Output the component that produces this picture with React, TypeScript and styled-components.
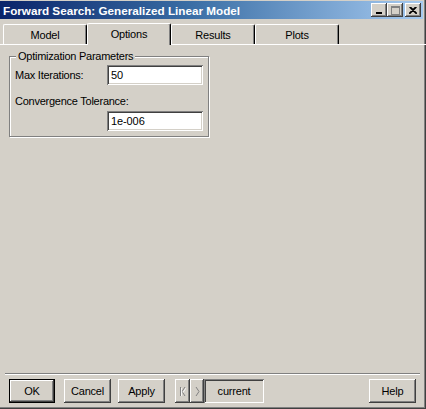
import React from "react";
import styled, { createGlobalStyle } from "styled-components";

const Global = createGlobalStyle`
  html, body { margin: 0; padding: 0; background: #D4D0C8; }
  body { font-family: "Liberation Sans", Arial, sans-serif; font-size: 11px; color: #000; }
`;

const FACE = "#D4D0C8";

const Window = styled.div`
  width: 426px;
  height: 409px;
  box-sizing: border-box;
  background: ${FACE};
  display: flex;
  flex-direction: column;
  box-shadow: inset -1px -1px 0 #404040, inset -2px -2px 0 #808080;
  overflow: hidden;
`;

const TitleBar = styled.div`
  height: 18px;
  margin: 1px 3px 0 0;
  background: linear-gradient(to right, #0a246a 0%, #3a6ea5 45%, #a6caf0 100%);
  display: flex;
  align-items: center;
  padding-left: 3px;
  padding-right: 2px;
`;

const Title = styled.span`
  flex: 1;
  color: #fff;
  font-weight: bold;
  font-size: 11.7px;
  white-space: nowrap;
`;

const Caps = styled.div`
  display: flex;
  align-items: center;
`;

const raised = `
  background: ${FACE};
  box-shadow: inset -1px -1px 0 #404040, inset 1px 1px 0 #ffffff,
    inset -2px -2px 0 #808080, inset 2px 2px 0 ${FACE};
`;

const CapButton = styled.div<{ $gap?: number }>`
  width: 16px;
  height: 14px;
  box-sizing: border-box;
  margin-left: ${(p) => p.$gap ?? 0}px;
  ${raised}
  display: flex;
  align-items: center;
  justify-content: center;
`;

const TabStrip = styled.div`
  height: 22px;
  margin-top: 3px;
  padding-left: 3px;
  display: flex;
  align-items: flex-end;
  position: relative;
  z-index: 1;
`;

const Tab = styled.div<{ $active?: boolean }>`
  width: ${(p) => (p.$active ? 84 : 84)}px;
  height: ${(p) => (p.$active ? 22 : 20)}px;
  margin-bottom: ${(p) => (p.$active ? -1 : 0)}px;
  box-sizing: border-box;
  background: ${FACE};
  border-top: 1px solid #fff;
  border-left: 1px solid #fff;
  border-right: 1px solid #000;
  box-shadow: inset -1px 0 0 #808080;
  border-radius: 2px 2px 0 0;
  display: flex;
  align-items: center;
  justify-content: center;
  padding-bottom: ${(p) => (p.$active ? 2 : 0)}px;
  letter-spacing: -0.2px;
`;

const Panel = styled.div`
  flex: 1;
  border-top: 1px solid #fff;
  display: flex;
  flex-direction: column;
  align-items: flex-start;
`;

const Group = styled.div`
  position: relative;
  margin: 11px 0 0 9px;
  width: 200px;
  height: 81px;
  box-sizing: border-box;
  border: 1px solid #808080;
  box-shadow: inset 1px 1px 0 #fff, 1px 1px 0 #fff;
  padding: 8px 5px 0 5px;
  display: flex;
  flex-direction: column;
`;

const Legend = styled.span`
  position: absolute;
  top: -8px;
  left: 6px;
  padding: 0 2px;
  background: ${FACE};
  letter-spacing: -0.25px;
  line-height: 14px;
`;

const Row = styled.div`
  display: flex;
  align-items: center;
  justify-content: space-between;
  height: 20px;
`;

const Label = styled.span<{ $top?: number }>`
  letter-spacing: -0.25px;
  line-height: 13px;
  margin-top: ${(p) => p.$top ?? 0}px;
`;

const Field = styled.div`
  width: 96px;
  height: 20px;
  box-sizing: border-box;
  background: #fff;
  box-shadow: inset 1px 1px 0 #808080, inset -1px -1px 0 #ffffff,
    inset 2px 2px 0 #404040, inset -2px -2px 0 ${FACE};
  padding: 3px 0 0 4px;
  letter-spacing: -0.1px;
  line-height: 14px;
`;

const RightRow = styled.div`
  display: flex;
  justify-content: flex-end;
  margin-top: 3px;
`;

const Separator = styled.div`
  margin: 0 6px 0 5px;
  height: 0;
  border-top: 1px solid #808080;
  border-bottom: 1px solid #fff;
`;

const Footer = styled.div`
  display: flex;
  align-items: center;
  height: 24px;
  margin: 4px 0 6px 0;
  padding: 0 10px 0 9px;
`;

const Button = styled.div<{ $w: number; $gap?: number; $default?: boolean }>`
  width: ${(p) => p.$w}px;
  height: 24px;
  margin-left: ${(p) => p.$gap ?? 0}px;
  box-sizing: border-box;
  display: flex;
  align-items: center;
  justify-content: center;
  letter-spacing: -0.2px;
  background: ${FACE};
  ${(p) =>
    p.$default
      ? `box-shadow: inset 0 0 0 1px #000, inset -2px -2px 0 #404040, inset 2px 2px 0 #ffffff, inset -3px -3px 0 #808080;`
      : `box-shadow: inset -1px -1px 0 #404040, inset 1px 1px 0 #ffffff, inset -2px -2px 0 #808080, inset 2px 2px 0 ${FACE};`}
`;

const NavButton = styled.div<{ $w: number; $gap?: number }>`
  width: ${(p) => p.$w}px;
  height: 24px;
  margin-left: ${(p) => p.$gap ?? 0}px;
  box-sizing: border-box;
  ${raised}
  display: flex;
  align-items: center;
  justify-content: center;
`;

const Current = styled.div`
  width: 60px;
  height: 24px;
  box-sizing: border-box;
  box-shadow: inset 1px 1px 0 #808080, inset -1px -1px 0 #ffffff,
    inset 2px 2px 0 #404040, inset -2px -2px 0 ${FACE};
  display: flex;
  align-items: center;
  justify-content: center;
  letter-spacing: -0.2px;
`;

const Spacer = styled.div`
  flex: 1;
`;

export default function App() {
  return (
    <>
      <Global />
      <Window>
        <TitleBar>
          <Title>Forward Search: Generalized Linear Model</Title>
          <Caps>
            <CapButton>
              <svg width="8" height="7" viewBox="0 0 8 7">
                <rect x="1" y="5" width="6" height="2" fill="#000" />
              </svg>
            </CapButton>
            <CapButton>
              <svg width="9" height="9" viewBox="0 0 9 9">
                <rect x="0.5" y="0.5" width="8" height="8" fill="none" stroke="#808080" />
                <rect x="0" y="0" width="9" height="2" fill="#808080" />
              </svg>
            </CapButton>
            <CapButton $gap={2}>
              <svg width="8" height="7" viewBox="0 0 8 7">
                <path d="M0.5 0 L7.5 7 M1.5 0 L8 6.5 M7.5 0 L0.5 7 M6.5 0 L0 6.5" stroke="#000" strokeWidth="1.1" />
              </svg>
            </CapButton>
          </Caps>
        </TitleBar>
        <TabStrip>
          <Tab>Model</Tab>
          <Tab $active>Options</Tab>
          <Tab>Results</Tab>
          <Tab>Plots</Tab>
        </TabStrip>
        <Panel>
          <Group>
            <Legend>Optimization Parameters</Legend>
            <Row>
              <Label>Max Iterations:</Label>
              <Field>50</Field>
            </Row>
            <Label $top={10}>Convergence Tolerance:</Label>
            <RightRow>
              <Field>1e-006</Field>
            </RightRow>
          </Group>
        </Panel>
        <Separator />
        <Footer>
          <Button $w={46} $default>OK</Button>
          <Button $w={47} $gap={9}>Cancel</Button>
          <Button $w={47} $gap={7}>Apply</Button>
          <NavButton $w={15} $gap={10}>
            <svg width="7" height="9" viewBox="0 0 7 9">
              <path d="M1.5 0 V9 M6 0 L3 4.5 L6 9" stroke="#808080" fill="none" />
              <path d="M2.5 1 V9.5 M7 1 L4 5.5" stroke="#fff" fill="none" opacity="0.8" />
            </svg>
          </NavButton>
          <NavButton $w={14}>
            <svg width="5" height="9" viewBox="0 0 5 9">
              <path d="M1 0 L4 4.5 L1 9" stroke="#808080" fill="none" />
            </svg>
          </NavButton>
          <Current>current</Current>
          <Spacer />
          <Button $w={47}>Help</Button>
        </Footer>
      </Window>
    </>
  );
}
